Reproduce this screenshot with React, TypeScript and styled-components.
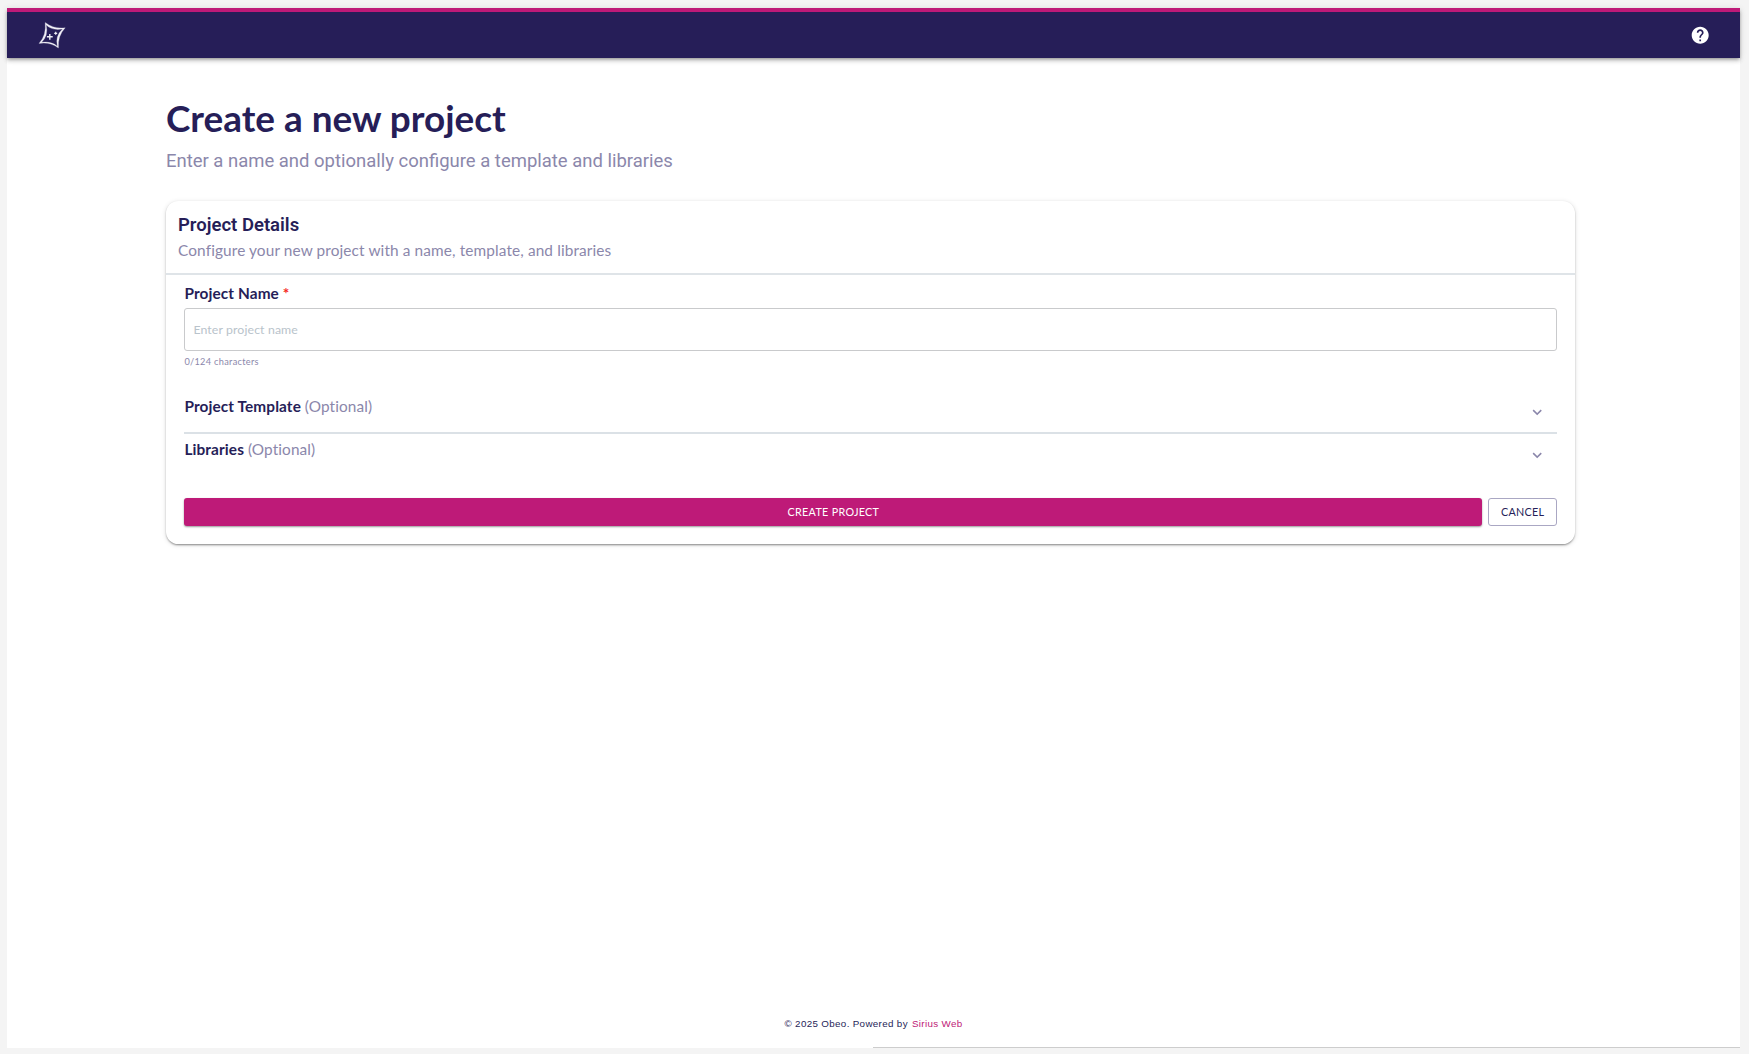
import React from "react";
import styled, { createGlobalStyle } from "styled-components";

const navy = "#261e58";
const muted = "#8b87ab";
const pink = "#be1a78";

const GlobalStyle = createGlobalStyle`
  * { box-sizing: border-box; }
  body { margin: 0; background: #f4f4f4; font-family: Lato, sans-serif; }
`;

const Frame = styled.div`
  height: 1054px;
  padding: 8px 9px 6px 7px;
  background: #f4f4f4;
`;

const Page = styled.div`
  height: 1040px;
  display: flex;
  flex-direction: column;
  background: #fff;
`;

const AppBar = styled.header`
  height: 50px;
  flex: none;
  display: flex;
  align-items: center;
  justify-content: space-between;
  padding: 0 30px;
  background: ${navy};
  border-top: 4px solid ${pink};
  box-shadow: 0 1.5px 3px -1px rgba(0, 0, 0, 0.3), 0 3px 4px rgba(0, 0, 0, 0.16), 0 1px 7px rgba(0, 0, 0, 0.12);
`;

const Main = styled.main`
  flex: 1;
  display: flex;
  flex-direction: column;
  padding: 38.6px 165px 0 159px;
`;

const Title = styled.h1`
  margin: 0 0 9.3px;
  font: 700 36.92px/42.9px Lato, sans-serif;
  color: ${navy};
`;

const Subtitle = styled.p`
  margin: 0 0 27.7px;
  font: 400 18.48px/24.5px Roboto, sans-serif;
  color: ${muted};
`;

const Card = styled.section`
  height: 343px;
  border-radius: 12.3px;
  background: #fff;
  box-shadow: 0 1.5px 2px -1px rgba(0, 0, 0, 0.3), 0 1px 2px rgba(0, 0, 0, 0.14), 0 1px 5px rgba(0, 0, 0, 0.14);
`;

const CardHeader = styled.div`
  height: 74px;
  padding: 12.3px 12px;
  border-bottom: 2px solid #dfe4e8;
`;

const CardTitle = styled.h2`
  margin: 0;
  font: 600 18.5px/24.5px Roboto, sans-serif;
  color: ${navy};
`;

const CardText = styled.p`
  margin: 0;
  font: 400 15.38px/24.5px Lato, sans-serif;
  letter-spacing: 0.0075em;
  color: ${muted};
`;

const Form = styled.div`
  display: flex;
  flex-direction: column;
  padding: 6px 18px 0 18.4px;
`;

const Label = styled.div`
  font: 700 15.37px/24.5px Lato, sans-serif;
  letter-spacing: 0.0075em;
  color: ${navy};
`;

const Required = styled.span`
  color: #f5281e;
`;

const Optional = styled.span`
  font-weight: 400;
  color: ${muted};
`;

const Field = styled.input`
  height: 43px;
  margin-top: 2.5px;
  padding: 0 8px;
  border: 1px solid #c9cacc;
  border-radius: 3px;
  outline: none;
  font: 400 12.3px Lato, sans-serif;
  letter-spacing: 0.00938em;
  color: ${navy};
  &::placeholder { color: #b9c3cb; opacity: 1; }
`;

const Counter = styled.div`
  margin-top: 3px;
  height: 37px;
  font: 400 9.2px/15.3px Lato, sans-serif;
  letter-spacing: 0.0333em;
  color: ${muted};
`;

const Section = styled.div<{ $divided?: boolean }>`
  height: ${(p) => (p.$divided ? "43px" : "64px")};
  padding-top: 3px;
  display: flex;
  justify-content: space-between;
  border-bottom: ${(p) => (p.$divided ? "2px solid #dbe1e6" : "none")};
`;

const Actions = styled.div`
  display: flex;
  gap: 6px;
`;

const Button = styled.button<{ $primary?: boolean }>`
  height: 28px;
  padding: 0;
  flex: ${(p) => (p.$primary ? "1" : "0 0 68.6px")};
  border: ${(p) => (p.$primary ? "none" : "1px solid #aaa7c3")};
  border-radius: 3px;
  background: ${(p) => (p.$primary ? pink : "#fff")};
  color: ${(p) => (p.$primary ? "#fff" : navy)};
  font: 400 10.76px/18px Lato, sans-serif;
  letter-spacing: 0.02857em;
  box-shadow: ${(p) => (p.$primary ? "0 1px 2px rgba(0, 0, 0, 0.4)" : "none")};
`;

const Footer = styled.footer`
  padding-bottom: 16px;
  text-align: center;
  font: 400 9.8px/15px "Liberation Sans", Arial, sans-serif;
  letter-spacing: 0.0345em;
  color: ${navy};
`;

const FooterLink = styled.a`
  margin-left: 1px;
  color: ${pink};
`;

const ProgressLine = styled.div`
  width: 867px;
  height: 1px;
  margin-left: auto;
  flex: none;
  background: #cdcdcd;
`;

const ChevronIcon = styled.svg`
  width: 18.4px;
  height: 18.4px;
  margin: 9px 10.4px 0 0;
  fill: ${muted};
`;

const Chevron = () => (
  <ChevronIcon viewBox="0 0 24 24">
    <path d="M7.41 8.59 12 13.17l4.59-4.58L18 10l-6 6-6-6z" />
  </ChevronIcon>
);

const Logo = () => (
  <svg width="29" height="29" viewBox="37 20.5 29 29" fill="#f0eff6" stroke="#f0eff6">
    <path
      fillRule="evenodd"
      strokeWidth=".25"
      d="M45.2 22Q53.5 28.6 65.2 27.3Q57.5 35.5 58.4 47.5Q50.5 41.3 39 42.9Q46.7 34.5 45.2 22ZM46.2 24.6Q48.6 35.2 41.6 41.8Q51.5 40.6 57.3 45.7Q55 35.5 62.5 28.5Q52.5 30.4 46.2 24.6Z"
    />
    <path d="M49.8 33.4V39.2M46.9 36.3H52.7" strokeWidth="1.4" />
    <path d="M55.7 31.3V34.3M54.2 32.8H57.2" strokeWidth="1.2" />
  </svg>
);

const Help = () => (
  <svg width="20.4" height="20.4" viewBox="0 0 24 24" fill="#fff">
    <path d="M12 2C6.48 2 2 6.48 2 12s4.48 10 10 10 10-4.48 10-10S17.52 2 12 2zm1 17h-2v-2h2v2zm2.07-7.75-.9.92C13.45 12.9 13 13.5 13 15h-2v-.5c0-1.1.45-2.1 1.17-2.83l1.24-1.26c.37-.36.59-.86.59-1.41 0-1.1-.9-2-2-2s-2 .9-2 2H8c0-2.21 1.79-4 4-4s4 1.79 4 4c0 .88-.36 1.68-.93 2.25z" />
  </svg>
);

export default function App() {
  return (
    <Frame>
      <GlobalStyle />
      <Page>
        <AppBar>
          <Logo />
          <Help />
        </AppBar>
        <Main>
          <Title>Create a new project</Title>
          <Subtitle>Enter a name and optionally configure a template and libraries</Subtitle>
          <Card>
            <CardHeader>
              <CardTitle>Project Details</CardTitle>
              <CardText>Configure your new project with a name, template, and libraries</CardText>
            </CardHeader>
            <Form>
              <Label>Project Name <Required>*</Required></Label>
              <Field placeholder="Enter project name" />
              <Counter>0/124 characters</Counter>
              <Section $divided>
                <Label>Project Template <Optional>(Optional)</Optional></Label>
                <Chevron />
              </Section>
              <Section>
                <Label>Libraries <Optional>(Optional)</Optional></Label>
                <Chevron />
              </Section>
              <Actions>
                <Button $primary>CREATE PROJECT</Button>
                <Button>CANCEL</Button>
              </Actions>
            </Form>
          </Card>
        </Main>
        <Footer>
          © 2025 Obeo. Powered by <FooterLink>Sirius Web</FooterLink>
        </Footer>
        <ProgressLine />
      </Page>
    </Frame>
  );
}
